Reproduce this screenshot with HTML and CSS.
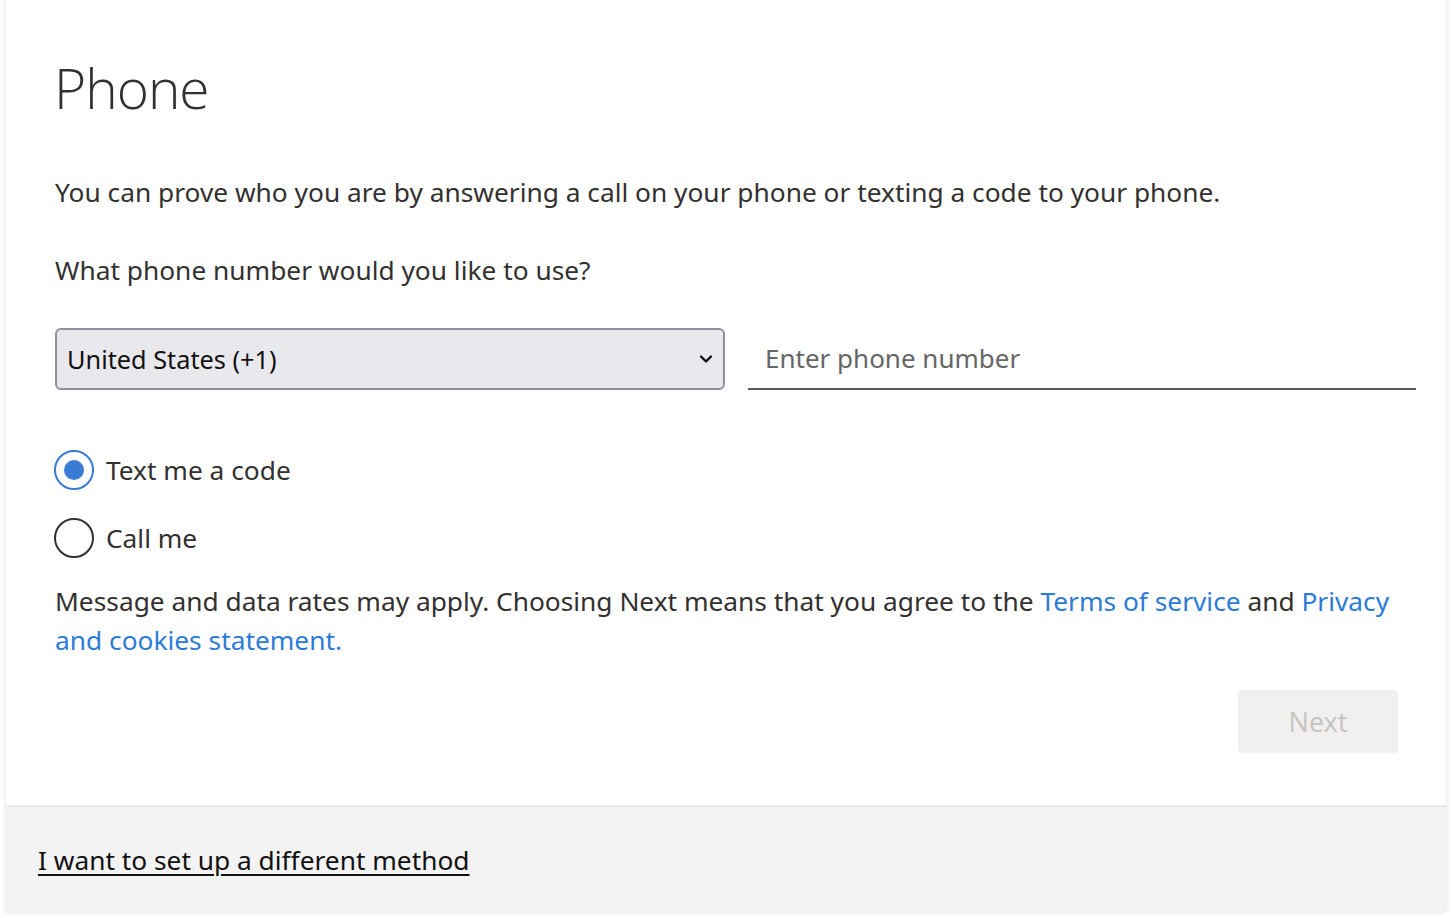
FILE: index.html
```html
<!DOCTYPE html>
<html>
<head>
<meta charset="utf-8">
<link rel="stylesheet" href="styles.css">
</head>
<body>
<div class="card">
  <div class="main">
    <h1 class="title">Phone</h1>
    <p class="intro">You can prove who you are by answering a call on your phone or texting a code to your phone.</p>
    <p class="question">What phone number would you like to use?</p>
    <div class="phone-row">
      <div class="select">
        <span>United States (+1)</span>
        <svg class="chev" width="14" height="10" viewBox="0 0 14 10"><path d="M2 2.5 L7 7.5 L12 2.5" fill="none" stroke="#111" stroke-width="2.4" stroke-linecap="round" stroke-linejoin="round"/></svg>
      </div>
      <div class="input"><span class="placeholder">Enter phone number</span></div>
    </div>
    <div class="radios">
      <label class="radio"><span class="dot checked"></span><span>Text me a code</span></label>
      <label class="radio"><span class="dot"></span><span>Call me</span></label>
    </div>
    <p class="legal">Message and data rates may apply. Choosing Next means that you agree to the <a href="#">Terms of service</a> and <a href="#">Privacy and cookies statement.</a></p>
    <div class="actions"><button class="next">Next</button></div>
  </div>
  <div class="footer"><a href="#">I want to set up a different method</a></div>
</div>
</body>
</html>
```
FILE: styles.css
```css
html, body { margin: 0; padding: 0; background: #fff; }
body {
  font-family: "Noto Sans", "Open Sans", sans-serif;
  color: #323130;
  height: 918px;
  overflow: hidden;
}
.card {
  margin: -10px 6px 0 6px;
  width: 1440px;
  background: #fff;
  box-shadow: 0 0 5px rgba(0,0,0,0.12);
}
.main { padding: 10px 36px 0 48px; }
.title {
  margin: 0;
  padding-top: 52px;
  font-family: "Open Sans", "Noto Sans", sans-serif;
  font-size: 55px;
  font-weight: 300;
  letter-spacing: -1px;
  line-height: 72px;
  color: #323130;
}
.intro {
  margin: 49px 0 0 1px;
  font-size: 26.3px;
  line-height: 39px;
}
.question {
  margin: 39px 0 0 1px;
  font-size: 26.3px;
  line-height: 39px;
}
.phone-row {
  display: flex;
  gap: 23px;
  margin-top: 38px;
  margin-left: 1px;
}
.select {
  flex: 0 0 670px;
  height: 62px;
  box-sizing: border-box;
  border: 2px solid #8f8f9d;
  border-radius: 6px;
  background: #e9e9ed;
  display: flex;
  align-items: center;
  justify-content: space-between;
  padding: 0 10px 0 10px;
  font-size: 25.3px;
  color: #111;
}
.input {
  flex: 0 0 668px;
  height: 62px;
  box-sizing: border-box;
  border-bottom: 2px solid #5a5a5a;
  display: flex;
  align-items: center;
  padding-left: 17px;
  font-size: 26px;
}
.placeholder { color: #666; }
.radios {
  margin-top: 60px;
  display: flex;
  flex-direction: column;
  gap: 28px;
}
.radio {
  display: flex;
  align-items: center;
  gap: 12px;
  font-size: 26.3px;
  line-height: 40px;
}
.dot {
  width: 40px;
  height: 40px;
  box-sizing: border-box;
  border: 2px solid #323130;
  border-radius: 50%;
  position: relative;
  flex: 0 0 40px;
}
.dot.checked { border-color: #3a7bd5; }
.dot.checked::after {
  content: "";
  position: absolute;
  left: 8px; top: 8px;
  width: 20px; height: 20px;
  border-radius: 50%;
  background: #3a7bd5;
}
.legal {
  margin: 24px 0 0 1px;
  font-size: 26.3px;
  line-height: 39px;
}
.legal a { color: #2b7bd6; text-decoration: none; }
.actions {
  display: flex;
  justify-content: flex-end;
  margin-top: 30px;
  padding-right: 12px;
  padding-bottom: 52px;
}
.next {
  width: 160px;
  height: 63px;
  border: none;
  border-radius: 4px;
  background: #f1f0ef;
  color: #c8c6c4;
  font-family: inherit;
  font-size: 27px;
}
.footer {
  background: #f3f3f3;
  border-top: 2px solid #e8e8e8;
  height: 107px;
  box-sizing: border-box;
  display: flex;
  align-items: center;
  padding-left: 32px;
}
.footer a {
  color: #111;
  font-size: 26.3px;
  text-decoration: underline;
  text-underline-offset: 4px;
}
```
